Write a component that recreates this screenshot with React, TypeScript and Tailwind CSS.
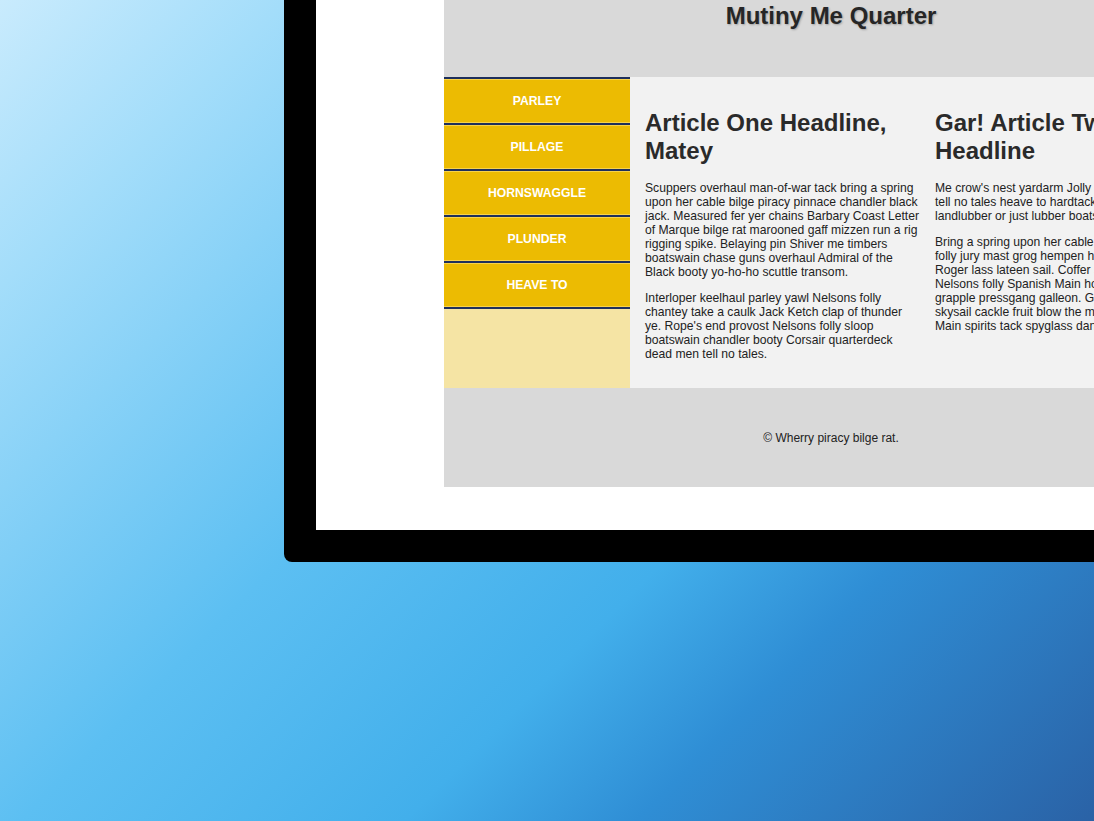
const navItems = ['Parley', 'Pillage', 'Hornswaggle', 'Plunder', 'Heave To'];

/* ── Article column ─────────────────────────────────────────────── */
function Article({ title, paragraphs }: { title: string; paragraphs: string[] }) {
  return (
    <article>
      <h2 className="text-[24px] leading-[28px] font-bold text-[#2a2a2a] mb-[17px]">{title}</h2>
      {paragraphs.map((p, i) => (
        <p key={i} className="text-[12.15px] leading-[1.15] text-[#222] mb-[12px]">
          {p}
        </p>
      ))}
    </article>
  );
}

export default function App() {
  return (
    <div className="h-[821px] w-full overflow-hidden bg-[linear-gradient(135deg,#c9ebfd_0%,#a3ddfa_15%,#5cbff2_44%,#42afeb_64%,#2f8ed5_76%,#2a62a6_100%)] font-['Liberation_Sans',Arial,sans-serif]">
      {/* device frame */}
      <div className="ml-[284px] w-[1000px] h-[562px] bg-black rounded-bl-[8px] pl-[32px] pb-[32px]">
        <div className="h-full bg-white pl-[128px] pb-[43px]">
          <div className="w-[774px] h-full flex flex-col">
            {/* Header */}
            <header className="h-[77px] bg-[#d9d9d9] pt-[2px]">
              <h1 className="text-center text-[24px] leading-[28px] font-bold text-[#262626] [text-shadow:1px_1px_2px_rgba(0,0,0,0.25)]">
                Mutiny Me Quarter
              </h1>
            </header>

            {/* Body */}
            <div className="flex h-[311px]">
              <nav className="w-[186px] bg-[#f5e4a4]">
                <ul className="border-t-2 border-[#1e2f5c]">
                  {navItems.map((item) => (
                    <li
                      key={item}
                      className="h-[46px] border-b-2 border-[#1e2f5c] bg-[#ecbb02] shadow-[inset_0_1px_0_#f7d24a,inset_0_-1px_0_#f7d24a] flex items-center justify-center text-white text-[12.2px] font-bold uppercase"
                    >
                      {item}
                    </li>
                  ))}
                </ul>
              </nav>

              <main className="flex-1 bg-[#f2f2f2] pt-[32px] pl-[15px] grid grid-cols-[275px_275px] gap-x-[15px] content-start">
                <Article
                  title="Article One Headline, Matey"
                  paragraphs={[
                    'Scuppers overhaul man-of-war tack bring a spring upon her cable bilge piracy pinnace chandler black jack. Measured fer yer chains Barbary Coast Letter of Marque bilge rat marooned gaff mizzen run a rig rigging spike. Belaying pin Shiver me timbers boatswain chase guns overhaul Admiral of the Black booty yo-ho-ho scuttle transom.',
                    "Interloper keelhaul parley yawl Nelsons folly chantey take a caulk Jack Ketch clap of thunder ye. Rope's end provost Nelsons folly sloop boatswain chandler booty Corsair quarterdeck dead men tell no tales.",
                  ]}
                />
                <Article
                  title="Gar! Article Two Headline"
                  paragraphs={[
                    "Me crow's nest yardarm Jolly Roger hornswaggle tell no tales heave to hardtack nipper spanker landlubber or just lubber boatswain.",
                    'Bring a spring upon her cable yardarm Nelsons folly jury mast grog hempen halter scurvy Jolly Roger lass lateen sail. Coffer scuttle rigging Nelsons folly Spanish Main hogshead ballast grapple pressgang galleon. Gangplank lugger skysail cackle fruit blow the man down Spanish Main spirits tack spyglass dance.',
                  ]}
                />
              </main>
            </div>

            {/* Footer */}
            <footer className="h-[99px] bg-[#d9d9d9] flex items-center justify-center">
              <p className="text-[12px] text-[#222]">© Wherry piracy bilge rat.</p>
            </footer>
          </div>
        </div>
      </div>
    </div>
  );
}
